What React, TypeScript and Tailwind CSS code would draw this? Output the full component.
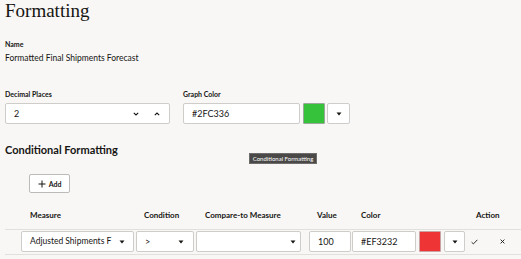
import React from "react";

const Tri = () => (
  <svg width="6" height="4" viewBox="0 0 6 4" className="shrink-0">
    <path d="M0.5 0.5 L5.5 0.5 L3 3.5 Z" fill="#161513" />
  </svg>
);

const ChevDown = () => (
  <svg width="6" height="4" viewBox="0 0 6 4">
    <path d="M0.8 0.8 L3 3 L5.2 0.8" fill="none" stroke="#161513" strokeWidth="1.1" />
  </svg>
);
const ChevUp = () => (
  <svg width="6" height="4" viewBox="0 0 6 4">
    <path d="M0.8 3.2 L3 1 L5.2 3.2" fill="none" stroke="#161513" strokeWidth="1.1" />
  </svg>
);

export default function App() {
  return (
    <div className="relative w-[521px] h-[259px] overflow-hidden bg-[#f8f7f5] text-[#161513] font-['Lato',sans-serif]">
      <div className="pl-[5px] flex flex-col">
        <h1 className="h-[22px] text-[19px] leading-[22px] font-['Liberation_Serif',serif] font-normal">Formatting</h1>
        <div className="mt-[17px] text-[7px] leading-[10px] font-bold">Name</div>
        <div className="mt-[3px] text-[8.5px] leading-[12px]">Formatted Final Shipments Forecast</div>

        <div className="mt-[25px] flex">
          <div className="flex flex-col w-[165px]">
            <div className="text-[7px] leading-[10px] font-bold">Decimal Places</div>
            <div className="mt-[4px] h-[21px] bg-white border border-[#cfcdca] rounded-[2px] flex items-center pl-[8px] pr-[9px] text-[9px]">
              <span className="flex-1">2</span>
              <div className="flex items-center gap-[15px]">
                <ChevDown />
                <ChevUp />
              </div>
            </div>
          </div>
          <div className="flex flex-col ml-[13px]">
            <div className="text-[7px] leading-[10px] font-bold">Graph Color</div>
            <div className="mt-[4px] flex">
              <div className="w-[117px] h-[21px] bg-white border border-[#cfcdca] rounded-[2px] flex items-center pl-[8px] text-[9px]">#2FC336</div>
              <div className="ml-[3px] w-[22px] h-[21px] bg-[#36c23a] border border-[#9aa89a] rounded-[1px]" />
              <div className="ml-[2px] w-[23px] h-[21px] bg-white border border-[#cfcdca] rounded-[2px] flex items-center justify-center">
                <Tri />
              </div>
            </div>
          </div>
        </div>

        <div className="mt-[19px] text-[11px] leading-[14px] font-bold">Conditional Formatting</div>

        <div className="mt-[17px] ml-[24px] w-[41px] h-[19px] bg-white border border-[#bdbbb8] rounded-[2px] flex items-center justify-center gap-[3px]">
          <svg width="8" height="8" viewBox="0 0 8 8">
            <path d="M4 0.5 V7.5 M0.5 4 H7.5" stroke="#161513" strokeWidth="1" />
          </svg>
          <span className="text-[7px] leading-[10px] font-bold">Add</span>
        </div>

        <div className="mt-[16px] flex h-[21px] items-start border-b border-[#e2e0dd] text-[8px] leading-[12px] font-bold">
          <div className="ml-[16px] w-[113px] pl-[9px]">Measure</div>
          <div className="ml-[2px] w-[58px] pl-[8px]">Condition</div>
          <div className="ml-[2px] w-[105px] pl-[9px]">Compare-to Measure</div>
          <div className="ml-[8px] w-[42px] pl-[8px]">Value</div>
          <div className="ml-[1px] w-[113px] pl-[9px]">Color</div>
          <div className="ml-[11px]">Action</div>
        </div>

        <div className="flex h-[25px] items-start pt-[1px] border-b border-[#e2e0dd] text-[9px]">
          <div className="ml-[16px] w-[113px] h-[21px] bg-white border border-[#cfcdca] rounded-[2px] flex items-center pl-[8px] pr-[8px]">
            <span className="whitespace-nowrap text-[8.5px]">Adjusted Shipments F</span>
            <span className="ml-auto"><Tri /></span>
          </div>
          <div className="ml-[2px] w-[58px] h-[21px] bg-white border border-[#cfcdca] rounded-[2px] flex items-center pl-[8px] pr-[9px]">
            <span className="flex-1">&gt;</span>
            <Tri />
          </div>
          <div className="ml-[2px] w-[105px] h-[21px] bg-white border border-[#cfcdca] rounded-[2px] flex items-center justify-end pr-[4px]">
            <Tri />
          </div>
          <div className="ml-[8px] w-[42px] h-[21px] bg-white border border-[#cfcdca] rounded-[2px] flex items-center pl-[8px]">100</div>
          <div className="ml-[1px] w-[64px] h-[21px] bg-white border border-[#cfcdca] rounded-[2px] flex items-center pl-[8px]">#EF3232</div>
          <div className="ml-[3px] w-[22px] h-[21px] bg-[#ee3434] border border-[#c9a3a3] rounded-[1px]" />
          <div className="ml-[3px] w-[21px] h-[21px] bg-white border border-[#cfcdca] rounded-[2px] flex items-center justify-center">
            <Tri />
          </div>
          <div className="ml-[6px] h-[21px] flex items-center">
            <svg width="7" height="6" viewBox="0 0 7 6">
              <path d="M0.6 3.2 L2.4 4.9 L6.4 0.8" fill="none" stroke="#161513" strokeWidth="0.9" />
            </svg>
          </div>
          <div className="ml-[22px] h-[21px] flex items-center">
            <svg width="5" height="5" viewBox="0 0 5 5">
              <path d="M0.6 0.6 L4.4 4.4 M4.4 0.6 L0.6 4.4" fill="none" stroke="#161513" strokeWidth="0.9" />
            </svg>
          </div>
        </div>
      </div>

      <div className="absolute left-[249px] top-[153px] w-[68px] h-[11px] bg-[#4a4948] border border-[#6e6d6b] text-white text-[6px] leading-[9px] flex items-center justify-center whitespace-nowrap">
        Conditional Formatting
      </div>
    </div>
  );
}
